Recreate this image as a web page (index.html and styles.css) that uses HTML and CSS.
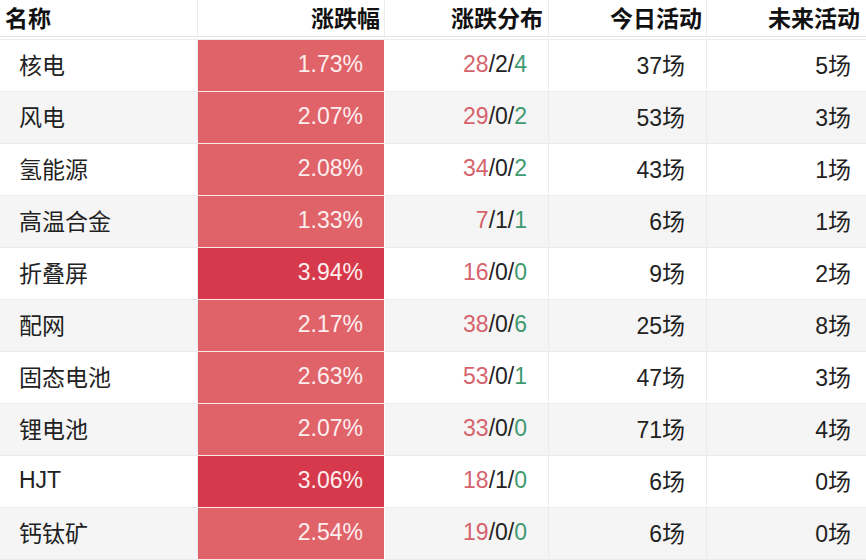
FILE: index.html
```html
<!DOCTYPE html>
<html lang="zh">
<head>
<meta charset="utf-8">
<link rel="stylesheet" href="styles.css">
</head>
<body>
<div class="table">
  <div class="row head">
    <div class="cell name">名称</div>
    <div class="cell pct">涨跌幅</div>
    <div class="cell dist">涨跌分布</div>
    <div class="cell today">今日活动</div>
    <div class="cell future">未来活动</div>
  </div>
  <div class="row">
    <div class="cell name">核电</div>
    <div class="cell pct red">1.73%</div>
    <div class="cell dist"><span class="up">28</span>/2/<span class="down">4</span></div>
    <div class="cell today">37场</div>
    <div class="cell future">5场</div>
  </div>
  <div class="row alt">
    <div class="cell name">风电</div>
    <div class="cell pct red">2.07%</div>
    <div class="cell dist"><span class="up">29</span>/0/<span class="down">2</span></div>
    <div class="cell today">53场</div>
    <div class="cell future">3场</div>
  </div>
  <div class="row">
    <div class="cell name">氢能源</div>
    <div class="cell pct red">2.08%</div>
    <div class="cell dist"><span class="up">34</span>/0/<span class="down">2</span></div>
    <div class="cell today">43场</div>
    <div class="cell future">1场</div>
  </div>
  <div class="row alt">
    <div class="cell name">高温合金</div>
    <div class="cell pct red">1.33%</div>
    <div class="cell dist"><span class="up">7</span>/1/<span class="down">1</span></div>
    <div class="cell today">6场</div>
    <div class="cell future">1场</div>
  </div>
  <div class="row">
    <div class="cell name">折叠屏</div>
    <div class="cell pct red strong">3.94%</div>
    <div class="cell dist"><span class="up">16</span>/0/<span class="down">0</span></div>
    <div class="cell today">9场</div>
    <div class="cell future">2场</div>
  </div>
  <div class="row alt">
    <div class="cell name">配网</div>
    <div class="cell pct red">2.17%</div>
    <div class="cell dist"><span class="up">38</span>/0/<span class="down">6</span></div>
    <div class="cell today">25场</div>
    <div class="cell future">8场</div>
  </div>
  <div class="row">
    <div class="cell name">固态电池</div>
    <div class="cell pct red">2.63%</div>
    <div class="cell dist"><span class="up">53</span>/0/<span class="down">1</span></div>
    <div class="cell today">47场</div>
    <div class="cell future">3场</div>
  </div>
  <div class="row alt">
    <div class="cell name">锂电池</div>
    <div class="cell pct red">2.07%</div>
    <div class="cell dist"><span class="up">33</span>/0/<span class="down">0</span></div>
    <div class="cell today">71场</div>
    <div class="cell future">4场</div>
  </div>
  <div class="row">
    <div class="cell name">HJT</div>
    <div class="cell pct red strong">3.06%</div>
    <div class="cell dist"><span class="up">18</span>/1/<span class="down">0</span></div>
    <div class="cell today">6场</div>
    <div class="cell future">0场</div>
  </div>
  <div class="row alt">
    <div class="cell name">钙钛矿</div>
    <div class="cell pct red">2.54%</div>
    <div class="cell dist"><span class="up">19</span>/0/<span class="down">0</span></div>
    <div class="cell today">6场</div>
    <div class="cell future">0场</div>
  </div>
</div>
</body>
</html>
```
FILE: styles.css
```css
html, body {
  margin: 0;
  padding: 0;
  background: #fff;
}
body {
  font-family: "Liberation Sans", "Noto Sans CJK SC", sans-serif;
  font-size: 23px;
  color: #222;
  width: 866px;
  height: 560px;
  overflow: hidden;
}
.table {
  display: flex;
  flex-direction: column;
}
.row {
  display: grid;
  grid-template-columns: 198px 187px 164px 158px 159px;
  height: 52px;
  background: #fff;
}
.row.alt {
  background: #f5f5f5;
}
.cell {
  display: flex;
  align-items: center;
  justify-content: flex-end;
  box-sizing: border-box;
  border-right: 1px solid #ebebeb;
  border-bottom: 1px solid #ebebeb;
  padding-bottom: 3px;
  white-space: nowrap;
}
.cell.name {
  justify-content: flex-start;
  padding-left: 19px;
}
.cell.pct, .cell.dist, .cell.today {
  padding-right: 21px;
}
.cell.future {
  padding-right: 15px;
  border-right: none;
}
.cell.red {
  background: #e0636a;
  color: #fdeeee;
  border-right: 1px solid #fff;
  border-bottom: 1px solid #fbe9ea;
}
.cell.red.strong {
  background: #d6394b;
}
.up {
  color: #d6636c;
}
.down {
  color: #3f9a70;
}
.row.head {
  height: 40px;
  padding-bottom: 2px;
  box-sizing: border-box;
  border-bottom: 1px solid #ececec;
}
.row.head .cell {
  font-weight: bold;
  color: #111;
  border-bottom: 1px solid #e4e4e4;
  padding-bottom: 2px;
}
.row.head .cell.name {
  padding-left: 5px;
}
.row.head .cell.pct {
  padding-right: 4px;
}
.row.head .cell.dist {
  padding-right: 5px;
}
.row.head .cell.today {
  padding-right: 4px;
}
.row.head .cell.future {
  padding-right: 6px;
}
```
